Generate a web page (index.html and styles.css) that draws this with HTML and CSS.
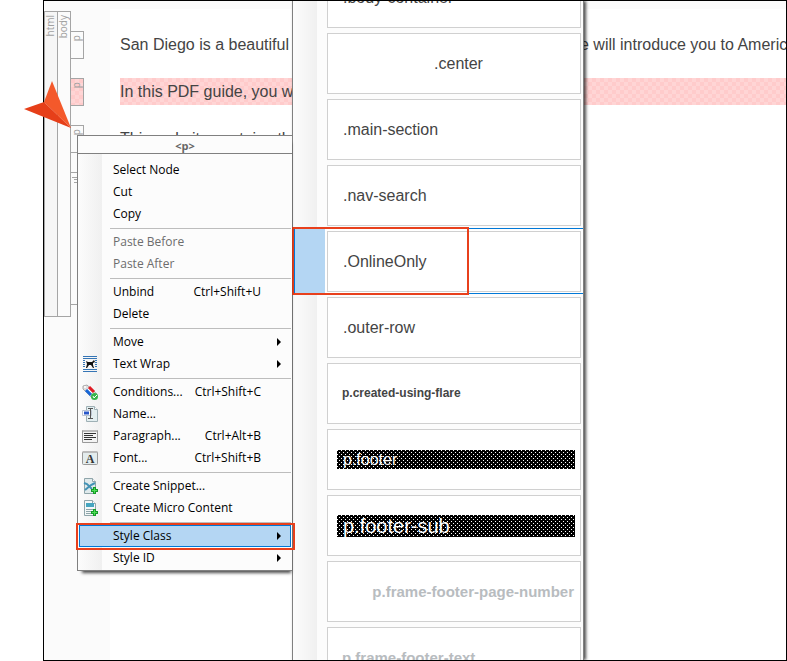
FILE: index.html
```html
<!DOCTYPE html>
<html lang="en">
<head>
<meta charset="utf-8">
<title>Style Class menu</title>
<link rel="stylesheet" href="styles.css">
</head>
<body>
<main class="editor">
  <div class="tree">
    <div class="bar bar-html"><span>html</span></div>
    <div class="bar bar-body"><span>body</span></div>
    <div class="blocks">
      <div class="block"><span>p</span></div>
      <div class="block marked"><span>p</span></div>
      <div class="block"><span>p</span></div>
      <div class="block list"><svg width="6" height="7" viewBox="0 0 6 7"><path d="M0 .5h6M2 2.500h4M2 5.500h4" stroke="#a5a5a5"/></svg></div>
    </div>
  </div>
  <article class="page">
    <p><span class="lead">San Diego is a beautiful</span><span>e will introduce you to America's</span></p>
    <p class="marked"><span class="lead">In this PDF guide, you will</span></p>
    <p><span class="lead">This website contains the</span></p>
  </article>

  <nav class="submenu" aria-label="Style classes">
    <button class="option"><span>.body-container</span></button>
    <button class="option center"><span>.center</span></button>
    <button class="option"><span>.main-section</span></button>
    <button class="option"><span>.nav-search</span></button>
    <button class="option selected"><span>.OnlineOnly</span></button>
    <button class="option"><span>.outer-row</span></button>
    <button class="option flare"><span>p.created-using-flare</span></button>
    <button class="option footer"><span><b>p.footer</b></span></button>
    <button class="option footer sub"><span><b>p.footer-sub</b></span></button>
    <button class="option frame right"><span>p.frame-footer-page-number</span></button>
    <button class="option frame"><span>p.frame-footer-text</span></button>
  </nav>

  <nav class="menu" aria-label="Node">
    <h1>&lt;p&gt;</h1>
    <div class="items">
      <button class="item"><span class="name">Select Node</span></button>
      <button class="item"><span class="name">Cut</span></button>
      <button class="item"><span class="name">Copy</span></button>
      <hr>
      <button class="item" disabled><span class="name">Paste Before</span></button>
      <button class="item" disabled><span class="name">Paste After</span></button>
      <hr>
      <button class="item"><span class="name">Unbind</span><kbd>Ctrl+Shift+U</kbd></button>
      <button class="item"><span class="name">Delete</span></button>
      <hr>
      <button class="item"><span class="name">Move</span><i class="more"></i></button>
      <button class="item">
        <svg viewBox="0 0 16 16"><path d="M1 .5h14M1 2.500h14M1 13.500h14M1 15.500h14M1 4.500h2M1 6.500h2M1 8.500h2M1 10.500h2M13 4.500h2M13 6.500h2M13 8.500h2M13 10.500h2" stroke="#3575b5"/><path d="M4 5l2 1h4l2-2 1 2-2 1v2l1 3h-1l-2-3H7l-2 3H4l1-4z" fill="#111"/></svg>
        <span class="name">Text Wrap</span><i class="more"></i></button>
      <hr>
      <button class="item">
        <svg viewBox="0 0 16 16"><path d="M1 2l4-1 10 9-4 5L1 5z" fill="#ddd" stroke="#aaa"/><path d="M7 3l5 5" stroke="#e01b24" stroke-width="3"/><path d="M4 6l5 5" stroke="#1666d8" stroke-width="3"/><path d="M6 5l5 5" stroke="#fff"/><circle cx="3" cy="3" r="1" fill="#fff"/><circle cx="12.500" cy="12.500" r="3.500" fill="#36b54a"/><path d="M11 12l1 2 3-3" fill="none" stroke="#fff"/></svg>
        <span class="name">Conditions...</span><kbd>Ctrl+Shift+C</kbd></button>
      <button class="item">
        <svg viewBox="0 0 16 16"><path d="M4.500.5h8l3 3v12h-11z" fill="#e3eef0" stroke="#9eb0b5"/><path d="M12.500.5v3h3" fill="#fff" stroke="#9eb0b5"/><path d="M.5 4.500h9v5h-9z" fill="#fff" stroke="#bbc4d2"/><path d="M2 7h5" stroke="#2857c8" stroke-width="3"/><path d="M6 2.500h5M6 12.500h5M8.500 3v9" stroke="#555"/></svg>
        <span class="name">Name...</span></button>
      <button class="item">
        <svg viewBox="0 0 16 16"><path d="M.5 2.500h15v12H.5z" fill="#f3f3f3" stroke="#999"/><path d="M1 3h14" stroke="#bbb" stroke-width="2"/><path d="M2 5.500h12M2 7.500h9M2 9.500h12M2 11.500h8" stroke="#333"/></svg>
        <span class="name">Paragraph...</span><kbd>Ctrl+Alt+B</kbd></button>
      <button class="item">
        <svg viewBox="0 0 16 16"><rect x=".5" y="1.500" width="15" height="13" rx="1" fill="#e3eced" stroke="#999"/><path d="M1 2h14" stroke="#bbb" stroke-width="2"/><text x="8" y="13" class="glyph">A</text></svg>
        <span class="name">Font...</span><kbd>Ctrl+Shift+B</kbd></button>
      <hr>
      <button class="item">
        <svg viewBox="0 0 16 16"><path d="M2.500.5h8l3 3v12h-11z" fill="#e0eaec" stroke="#8fa5aa"/><path d="M10.500.5v3h3" fill="#fff" stroke="#8fa5aa"/><path d="M2 5l3 1 5 5M13 5l-4 2-6 5" fill="none" stroke="#4392b5" stroke-width="2"/><path d="M12.500 9v7M9 12.500h7" stroke="#169b28" stroke-width="3"/><path d="M12.500 10v5M10 12.500h5" stroke="#4dde55"/></svg>
        <span class="name">Create Snippet...</span></button>
      <button class="item">
        <svg viewBox="0 0 16 16"><path d="M2.500.5h8l3 3v12h-11z" fill="#f4f8f8" stroke="#8fa5aa"/><path d="M10.500.5v3h3" fill="#fff" stroke="#8fa5aa"/><path d="M4 3h8v4H4z" fill="#45a5c0"/><path d="M4 9.500h8M4 11.500h5M4 13.500h5" stroke="#8fa5aa"/><path d="M12.500 9v7M9 12.500h7" stroke="#169b28" stroke-width="3"/><path d="M12.500 10v5M10 12.500h5" stroke="#4dde55"/></svg>
        <span class="name">Create Micro Content</span></button>
      <hr>
      <button class="item active"><span class="name">Style Class</span><i class="more"></i></button>
      <button class="item"><span class="name">Style ID</span><i class="more"></i></button>
    </div>
  </nav>
</main>
<svg class="pointer" width="48" height="48" viewBox="0 0 48 48"><path d="M28 0l19 47-27-26z" fill="#f4592b"/><path d="M0 28l20-7 27 26z" fill="#e63f19"/></svg>
</body>
</html>
```
FILE: styles.css
```css
* { box-sizing: border-box; }

body {
  position: relative;
  margin: 0;
  padding-left: 43px;
  background: #fff;
  font-family: "Liberation Sans", Arial, sans-serif;
}

button {
  margin: 0;
  padding: 0;
  border: 0;
  background: none;
  font: inherit;
  color: inherit;
  text-align: left;
}

.editor {
  position: relative;
  display: flex;
  height: 100vh;
  overflow: hidden;
  border: 1px solid #000;
  background: #fbfbfb;
}

.marked {
  background: repeating-conic-gradient(#ffd5d5 0 25%, #ffcbcb 0 50%) 0 0 / 8px 8px;
}

/* Element tree beside the page */
.tree {
  display: flex;
  flex: none;
  align-self: flex-start;
  width: 66px;
  margin-top: 10px;
  color: #a0a0a0;
  font: 10px/10px "Open Sans", sans-serif;
}

.tree span {
  writing-mode: vertical-rl;
  transform: rotate(180deg);
}

.bar {
  display: flex;
  align-items: flex-start;
  width: 13px;
  padding-top: 3px;
  border: 1px solid #a5a5a5;
  border-right: 0;
}

.bar-html { background: #f6f6f6; }

.bar-body {
  width: 14px;
  border-right: 1px solid #a5a5a5;
}

.blocks {
  display: flex;
  flex-direction: column;
  gap: 19px;
  margin-left: -1px;
  padding: 20px 0 12px;
}

.block {
  display: flex;
  align-items: flex-start;
  width: 14px;
  height: 28px;
  padding-top: 3px;
  border: 1px solid #a5a5a5;
}

.block.list {
  height: 133px;
  padding: 4px 1px;
}

/* Document page */
.page {
  flex: 1;
  min-width: 0;
  margin-top: 8px;
  padding: 22px 0 0 10px;
  background: #fff;
  color: #444;
  font-size: 16px;
  line-height: 27px;
}

.page p {
  display: flex;
  margin: 0 0 20px;
  white-space: nowrap;
}

.lead {
  flex: none;
  width: 460px;
}

/* Node menu */
.menu {
  position: absolute;
  left: 33px;
  top: 134px;
  width: 215px;
  border: 1px solid #808080;
  border-right: 0;
  background: #fcfcfc;
  box-shadow: 2px 5px 3px -3px rgba(0, 0, 0, .7);
  color: #000;
  font: 12px/22px "Open Sans", "Segoe UI", sans-serif;
}

.menu h1 {
  height: 18px;
  margin: 0;
  padding-top: 1px;
  border-bottom: 1px solid #808080;
  color: #666;
  font-size: 11px;
  line-height: 18px;
  text-align: center;
}

.items {
  padding: 5px 1px 1px;
  background: linear-gradient(90deg, #fcfcfc, #f0f0f0) 0 0 / 24px 100% no-repeat;
}

.items hr {
  height: 1px;
  margin: 3px 0 2px 31px;
  border: 0;
  background: #bdbdbd;
}

.item {
  position: relative;
  display: flex;
  align-items: center;
  width: 100%;
  height: 22px;
  padding: 0 30px 0 34px;
}

.item svg {
  width: 16px;
  height: 16px;
  margin: 0 15px 0 -31px;
}

.item:disabled { color: #6d6d6d; }

.name { flex: 1; }

kbd { font: inherit; }

.more {
  margin-right: -20px;
  border: 4px solid transparent;
  border-left-color: #000;
  border-right: 0;
}

.glyph {
  font: 700 12px "Liberation Serif", serif;
  fill: #333;
  text-anchor: middle;
}

.item.active {
  background: #b4d6f3;
  outline: 1px solid #0078d7;
  outline-offset: -1px;
}

.item.active::after,
.selected::after {
  content: "";
  position: absolute;
  border: 2px solid #e8401c;
}

.item.active::after { inset: -2px -4px -3px -3px; }

/* Style class list */
.submenu {
  position: absolute;
  left: 248px;
  top: 0;
  bottom: 0;
  display: flex;
  flex-direction: column;
  width: 292px;
  border-left: 1px solid #808080;
  border-right: 1px solid #808080;
  background: linear-gradient(90deg, #fcfcfc, #f0f0f0) 0 0 / 24px 100% no-repeat, #fcfcfc;
  box-shadow: 2px 0 3px rgba(0, 0, 0, .7);
  color: #444;
  font-size: 16px;
  line-height: 19px;
}

.option {
  position: relative;
  flex: none;
  height: 66px;
  padding: 3px 2px 2px 34px;
}

.option:first-child { margin-top: -37px; }

.option span {
  display: flex;
  align-items: center;
  height: 61px;
  padding: 0 6px 0 15px;
  border: 1px solid #d0d0d0;
  background: #fff;
}

.center span { justify-content: center; }

.selected {
  margin-left: 1px;
  padding: 2px 2px 2px 32px;
  border: 1px solid #0078d7;
  border-right: 0;
  background: linear-gradient(#b4d6f3, #b4d6f3) 0 0 / 30px 100% no-repeat #fff;
}

.selected::after { inset: -2px 114px -2px -3px; }

.flare span {
  padding-left: 14px;
  font-size: 12px;
  font-weight: 700;
}

.footer span { padding: 0 5px 0 9px; }

.footer b {
  flex: 1;
  padding-left: 6px;
  background:
    conic-gradient(at 1px 1px, transparent 75%, #fff 0) 0 0 / 4px 4px,
    conic-gradient(at 1px 1px, transparent 75%, #fff 0) 2px 2px / 4px 4px,
    #000;
  color: #fff;
  font-weight: 400;
}

.sub b {
  font-size: 20px;
  line-height: 22px;
}

.frame span {
  padding-left: 14px;
  color: #b8bcbf;
  font-size: 15px;
  font-weight: 700;
}

.right span { justify-content: flex-end; }

.pointer {
  position: absolute;
  left: 24px;
  top: 81px;
}
```
